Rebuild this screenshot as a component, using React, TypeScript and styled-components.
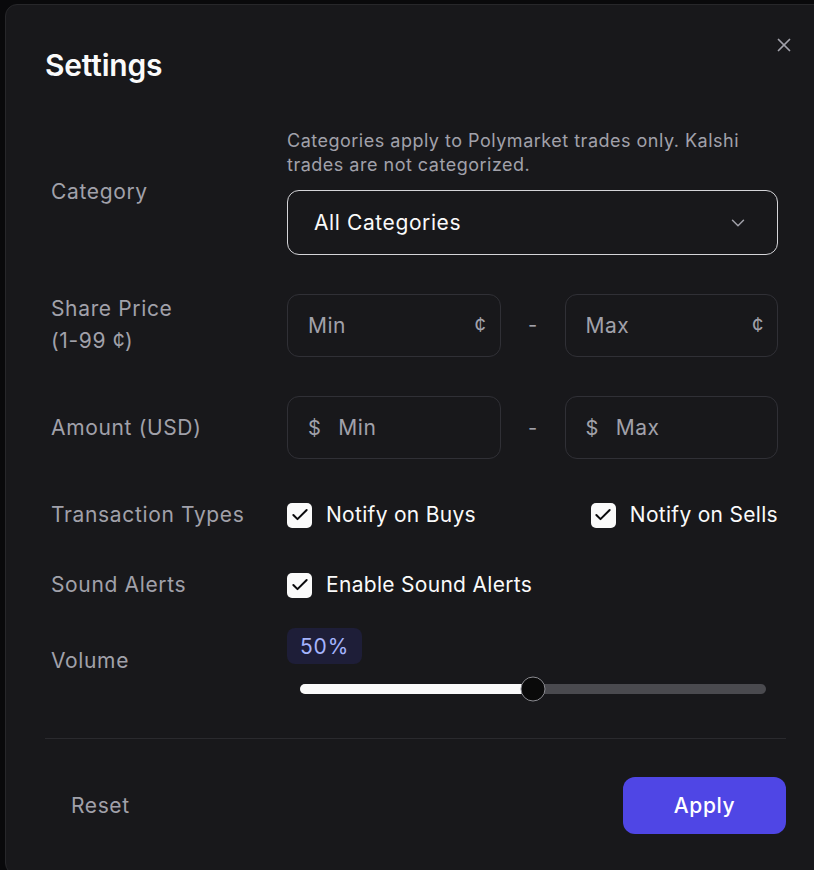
import React from 'react';
import styled, { createGlobalStyle } from 'styled-components';
import { X, ChevronDown, Check } from 'lucide-react';

const GlobalStyle = createGlobalStyle`
  html, body {
    margin: 0;
    padding: 0;
    background: #09090b;
    overflow: hidden;
  }
  body {
    font-family: Inter, "Noto Sans", sans-serif;
    -webkit-font-smoothing: antialiased;
  }
`;

const Page = styled.div`
  min-height: 870px;
  padding: 4px 0 0 5px;
`;

const Modal = styled.div`
  position: relative;
  width: 822px;
  box-sizing: border-box;
  background: #18181b;
  border: 1px solid #27272a;
  border-radius: 12px;
  padding: 41px 40px 40px 39px;
  color: #fafafa;
`;

const CloseButton = styled.button`
  position: absolute;
  top: 28px;
  right: 30px;
  width: 24px;
  height: 24px;
  padding: 0;
  border: none;
  background: transparent;
  color: #a1a1aa;
  display: flex;
  align-items: center;
  justify-content: center;
`;

const Title = styled.h2`
  margin: 0;
  font-size: 30px;
  line-height: 38px;
  font-weight: 600;
  letter-spacing: -0.2px;
  color: #fafafa;
`;

const Form = styled.div`
  display: flex;
  flex-direction: column;
  padding: 0 8px 0 6px;
  margin-top: 45px;
`;

const Row = styled.div<{ $mt?: number }>`
  display: grid;
  grid-template-columns: 236px 1fr;
  align-items: center;
  margin-top: ${(p) => p.$mt ?? 0}px;
`;

const Label = styled.div`
  font-size: 21px;
  line-height: 32px;
  letter-spacing: 0.65px;
  color: #a1a1aa;
`;

const Stack = styled.div<{ $gap: number }>`
  display: flex;
  flex-direction: column;
  gap: ${(p) => p.$gap}px;
`;

const Hint = styled.p`
  margin: 0;
  font-size: 18px;
  line-height: 24px;
  letter-spacing: 0.5px;
  color: #a1a1aa;
`;

const Select = styled.div`
  height: 65px;
  box-sizing: border-box;
  border: 1.5px solid #d4d4d8;
  border-radius: 12px;
  padding: 0 28px 0 26px;
  display: flex;
  align-items: center;
  justify-content: space-between;
  font-size: 21px;
  letter-spacing: 0.6px;
  color: #fafafa;
`;

const RangeRow = styled.div`
  display: grid;
  grid-template-columns: 1fr 64px 1fr;
  align-items: center;
`;

const Dash = styled.span`
  text-align: center;
  font-size: 20px;
  color: #a1a1aa;
`;

const Field = styled.div`
  height: 63px;
  box-sizing: border-box;
  border: 1px solid #303036;
  border-radius: 12px;
  display: flex;
  align-items: center;
  padding: 0 13px 0 20px;
  gap: 17px;
  font-size: 21px;
  letter-spacing: 0.5px;
  color: #a1a1aa;
`;

const Placeholder = styled.span`
  flex: 1;
`;

const Unit = styled.span`
  color: #a1a1aa;
  font-size: 20px;
`;

const Checks = styled.div`
  display: flex;
  justify-content: space-between;
  align-items: center;
`;

const CheckLabel = styled.label`
  display: flex;
  align-items: center;
  gap: 14px;
  font-size: 21px;
  line-height: 32px;
  letter-spacing: 0.3px;
  color: #fafafa;
`;

const Box = styled.span`
  width: 25px;
  height: 25px;
  border-radius: 5px;
  background: #fafafa;
  color: #09090b;
  display: flex;
  align-items: center;
  justify-content: center;
`;

const Badge = styled.span`
  align-self: flex-start;
  height: 36px;
  padding: 0 13px;
  border-radius: 8px;
  background: #1e1e38;
  color: #a5b4fc;
  font-size: 21px;
  letter-spacing: 0.8px;
  display: flex;
  align-items: center;
`;

const Track = styled.div`
  position: relative;
  margin: 0 12px 0 13px;
  height: 10px;
  border-radius: 5px;
  background: #4a4a4f;
`;

const Fill = styled.div`
  height: 100%;
  border-radius: 5px;
  background: #fafafa;
`;

const Thumb = styled.div`
  position: absolute;
  top: 50%;
  width: 25px;
  height: 25px;
  box-sizing: border-box;
  border-radius: 50%;
  background: #0a0a0a;
  border: 1px solid #8a8a90;
  transform: translate(-50%, -50%);
`;

const Divider = styled.hr`
  border: none;
  border-top: 1px solid #2a2a2e;
  margin: 44px 0 0 0;
`;

const Footer = styled.div`
  display: flex;
  justify-content: space-between;
  align-items: center;
  margin-top: 38px;
`;

const ResetButton = styled.button`
  border: none;
  background: transparent;
  padding: 0 26px;
  height: 57px;
  font-family: inherit;
  font-size: 21px;
  letter-spacing: 0.6px;
  color: #a1a1aa;
`;

const ApplyButton = styled.button`
  border: none;
  width: 163px;
  height: 57px;
  border-radius: 12px;
  background: #4f46e5;
  font-family: inherit;
  font-size: 21px;
  letter-spacing: 0.6px;
  font-weight: 500;
  color: #ffffff;
`;

const Checkbox = ({ label }: { label: string }) => (
  <CheckLabel>
    <Box>
      <Check size={20} strokeWidth={2.4} />
    </Box>
    {label}
  </CheckLabel>
);

const volume = 50;

export default function App() {
  return (
    <>
      <GlobalStyle />
      <Page>
        <Modal>
          <CloseButton aria-label="Close">
            <X size={22} strokeWidth={1.9} />
          </CloseButton>
          <Title>Settings</Title>

          <Form>
            <Row>
              <Label>Category</Label>
              <Stack $gap={13}>
                <Hint>
                  Categories apply to Polymarket trades only. Kalshi trades are not categorized.
                </Hint>
                <Select>
                  All Categories
                  <ChevronDown size={22} strokeWidth={1.6} color="#a1a1aa" />
                </Select>
              </Stack>
            </Row>

            <Row $mt={38}>
              <Label>
                Share Price
                <br />
                (1-99 ¢)
              </Label>
              <RangeRow>
                <Field>
                  <Placeholder>Min</Placeholder>
                  <Unit>¢</Unit>
                </Field>
                <Dash>-</Dash>
                <Field>
                  <Placeholder>Max</Placeholder>
                  <Unit>¢</Unit>
                </Field>
              </RangeRow>
            </Row>

            <Row $mt={39}>
              <Label>Amount (USD)</Label>
              <RangeRow>
                <Field>
                  <Unit>$</Unit>
                  <Placeholder>Min</Placeholder>
                </Field>
                <Dash>-</Dash>
                <Field>
                  <Unit>$</Unit>
                  <Placeholder>Max</Placeholder>
                </Field>
              </RangeRow>
            </Row>

            <Row $mt={40}>
              <Label>Transaction Types</Label>
              <Checks>
                <Checkbox label="Notify on Buys" />
                <Checkbox label="Notify on Sells" />
              </Checks>
            </Row>

            <Row $mt={38}>
              <Label>Sound Alerts</Label>
              <Checks>
                <Checkbox label="Enable Sound Alerts" />
              </Checks>
            </Row>

            <Row $mt={27}>
              <Label>Volume</Label>
              <Stack $gap={20}>
                <Badge>{volume}%</Badge>
                <Track>
                  <Fill style={{ width: `${volume}%` }} />
                  <Thumb style={{ left: `${volume}%` }} />
                </Track>
              </Stack>
            </Row>
          </Form>

          <Divider />

          <Footer>
            <ResetButton>Reset</ResetButton>
            <ApplyButton>Apply</ApplyButton>
          </Footer>
        </Modal>
      </Page>
    </>
  );
}
